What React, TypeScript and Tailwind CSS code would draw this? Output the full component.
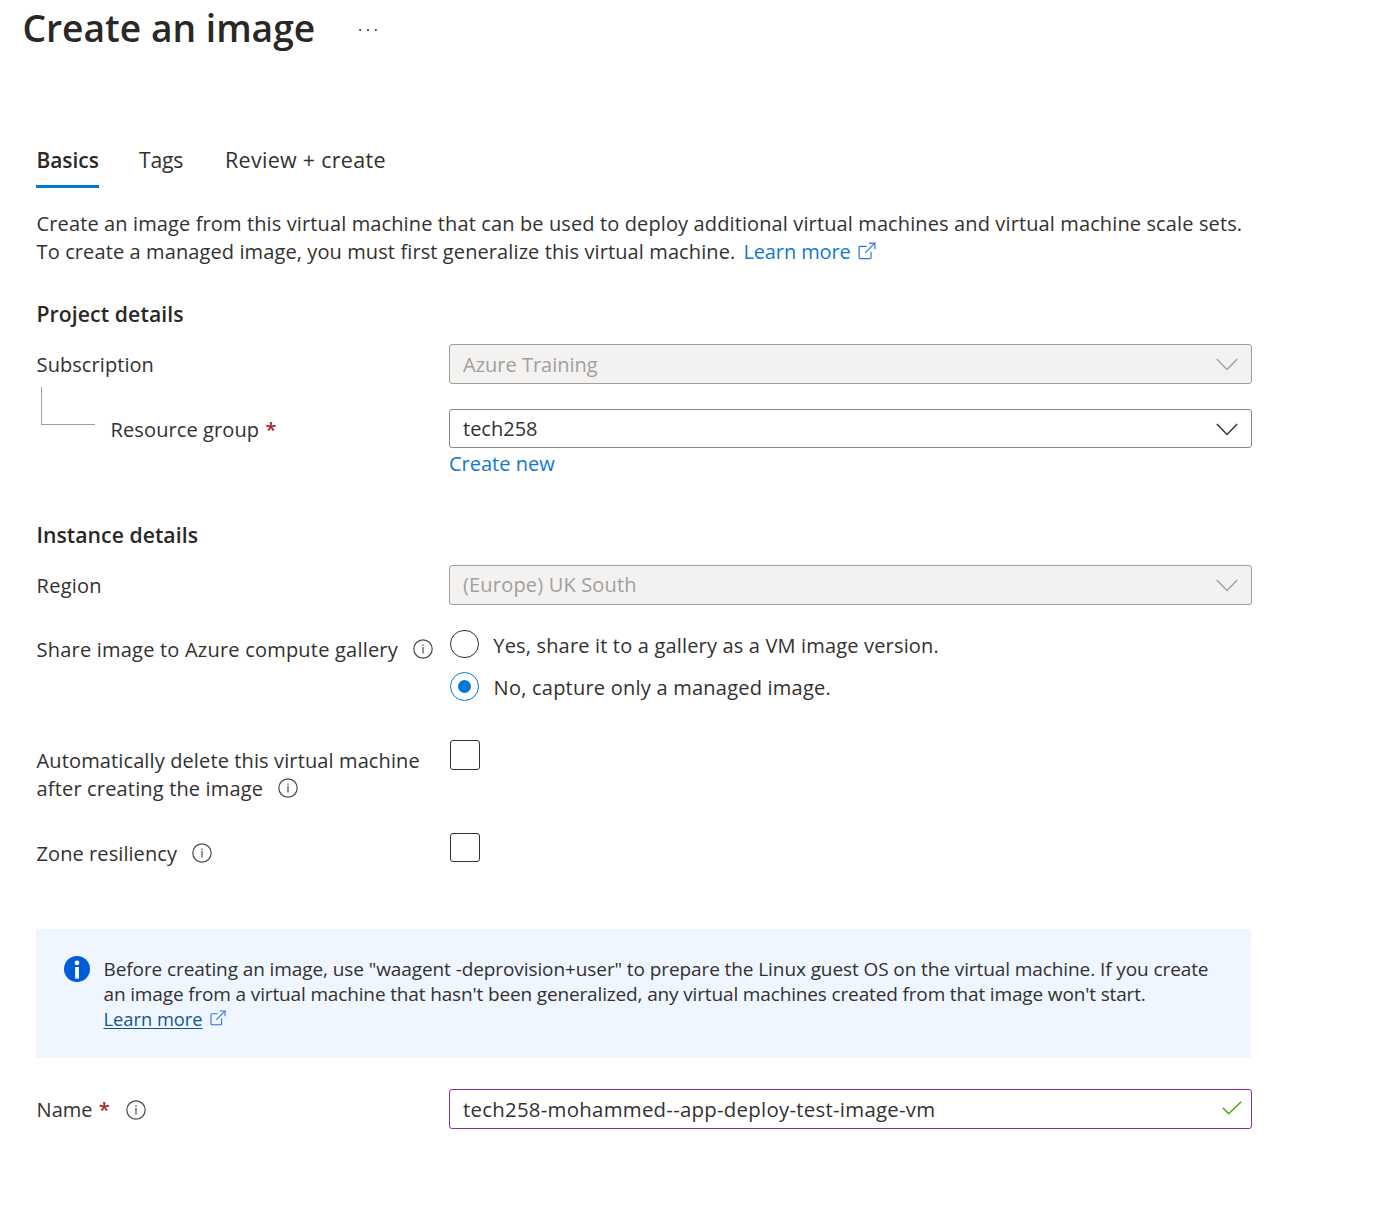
import type { ReactNode } from "react";

function InfoIcon({ className = "" }: { className?: string }) {
  return (
    <svg viewBox="0 0 20 20" className={`size-5 shrink-0 ${className}`} fill="none" stroke="#4a4948" strokeWidth="1.2">
      <circle cx="10" cy="10" r="9.2" />
      <path d="M10 8V14.4" />
      <path d="M10 5.4V6.9" />
    </svg>
  );
}

function ExternalIcon({ className = "" }: { className?: string }) {
  return (
    <svg viewBox="0 0 18 18" className={`shrink-0 ${className}`} fill="none" stroke="#2f6fe0" strokeWidth="1.2">
      <path d="M8.6 4.3H2.3Q1.1 4.3 1.1 5.5V15.4Q1.1 16.6 2.3 16.6H11.8Q13 16.6 13 15.4V9.4" />
      <path d="M7.2 10.9L16.8 1.2" />
      <path d="M11 1.1H16.9V7" />
    </svg>
  );
}

function Chevron() {
  return (
    <svg viewBox="0 0 22 13" className="mt-px h-[13px] w-[22px] shrink-0" fill="none" stroke="currentColor" strokeWidth="1.4">
      <path d="M0.8 1L11 11.4L21.2 1" />
    </svg>
  );
}

function Required() {
  return <b className="ml-px font-semibold text-[#a4262c]">*</b>;
}

function Select({ children, disabled = false, className = "" }: { children: ReactNode; disabled?: boolean; className?: string }) {
  return (
    <div
      className={`flex w-[803px] items-center justify-between rounded-[3px] border pr-[13.5px] pl-[13px] ${
        disabled ? "border-[#a19f9d] bg-[#f3f2f1] text-[#a19f9d]" : "border-[#8a8886] bg-white"
      } ${className}`}
    >
      {children}
      <Chevron />
    </div>
  );
}

function Radio({ checked = false, className = "" }: { checked?: boolean; className?: string }) {
  return (
    <span
      className={`flex w-[29px] shrink-0 items-center justify-center rounded-full border ${
        checked ? "border-[#0078d4]" : "border-[#323130]"
      } ${className}`}
    >
      {checked && <span className="size-[13px] rounded-full bg-[#0078d4]" />}
    </span>
  );
}

export default function App() {
  return (
    <div className="h-[1205px] w-[1373px] overflow-hidden bg-white font-['Open_Sans','Noto_Sans',sans-serif] text-[20px] leading-7 whitespace-nowrap text-[#323130]">
      <header className="flex h-14 items-center pl-[22.5px]">
        <h1 className="w-[335.5px] text-[37.2px] leading-[56px] font-semibold text-[#292827]">Create an image</h1>
        <svg viewBox="0 0 20 4" className="mt-[4px] h-1 w-5" fill="#323130">
          <circle cx="2.2" cy="2" r="1.1" />
          <circle cx="10" cy="2" r="1.1" />
          <circle cx="17.8" cy="2" r="1.1" />
        </svg>
      </header>

      <main className="pl-9">
        <nav className="mt-[90px] flex h-[42px] text-[21.5px]">
          <span className="mr-[40px] w-[63px] border-b-[3px] border-[#0078d4] pl-[0.4px] text-[20.9px] font-semibold text-[#292827]">Basics</span>
          <span className="mr-[41px] w-[45px] text-[21.2px] tracking-[-0.25px]">Tags</span>
          <span className="tracking-[0.28px]">Review + create</span>
        </nav>

        <section className="mt-[22px] pl-[0.6px]">
          <p className="tracking-[0.12px]">
            Create an image from this virtual machine that can be used to deploy additional virtual machines and virtual machine scale sets.
          </p>
          <p className="flex tracking-[0.105px]">
            To create a managed image, you must first generalize this virtual machine.
            <a className="ml-[8px] flex text-[#0f78d4]">
              <span className="w-[115px] tracking-[-0.1px]">Learn more</span>
              <ExternalIcon className="mt-[4px] size-[18px]" />
            </a>
          </p>
        </section>

        <h2 className="mt-[34px] pl-[0.4px] text-[21.2px] font-semibold tracking-[0.1px] text-[#292827]">Project details</h2>
        <div className="mt-4 flex h-10 items-center">
          <span className="w-[413px] pt-0.5 pl-[0.6px] tracking-[0.07px]">Subscription</span>
          <Select disabled className="h-10">
            <span className="pt-0.5">Azure Training</span>
          </Select>
        </div>
        <div className="flex">
          <span className="mt-[3px] mr-[15px] ml-[5px] h-[38px] w-[54px] border-b border-l border-[#a19f9d]" />
          <span className="mt-[32px] w-[339px] pl-[0.6px] tracking-[0.1px]">
            Resource group <Required />
          </span>
          <div className="mt-[25px]">
            <Select className="h-[39px]">tech258</Select>
            <a className="mt-0.5 block text-[#0f78d4]">Create new</a>
          </div>
        </div>

        <h2 className="mt-[43px] pl-[0.4px] text-[21.2px] font-semibold tracking-[0.05px] text-[#292827]">Instance details</h2>
        <div className="mt-4 flex h-10 items-center">
          <span className="w-[413px] pt-0.5 pl-[0.6px] tracking-[0.25px]">Region</span>
          <Select disabled className="h-10">
            <span className="tracking-[0.18px]">(Europe) UK South</span>
          </Select>
        </div>

        <div className="mt-[25px] flex h-[71px]">
          <div className="mt-[6px] flex w-[414px] pl-[0.6px]">
            <span className="w-[376.4px] tracking-[0.21px]">Share image to Azure compute gallery</span>
            <InfoIcon className="mt-[3.4px]" />
          </div>
          <div>
            <div className="flex h-7 gap-[14px]">
              <Radio className="h-[28px]" />
              <span className="mt-0.5 pl-[0.3px] tracking-[0.17px]">Yes, share it to a gallery as a VM image version.</span>
            </div>
            <div className="mt-[14px] flex h-[29px] gap-[14px]">
              <Radio checked className="h-[29px]" />
              <span className="mt-0.5 pl-[0.6px] tracking-[0.23px]">No, capture only a managed image.</span>
            </div>
          </div>
        </div>

        <div className="mt-[39px] flex h-[63px]">
          <div className="mt-[7px] w-[414px] pl-[0.6px]">
            <div className="tracking-[0.12px]">Automatically delete this virtual machine</div>
            <div className="flex">
              <span className="w-[241.4px] tracking-[0.16px]">after creating the image</span>
              <InfoIcon className="mt-[3.4px]" />
            </div>
          </div>
          <span className="h-[30px] w-[30px] rounded-[3px] border border-[#323130]" />
        </div>

        <div className="mt-[30px] flex h-[34px]">
          <div className="mt-[7px] flex w-[414px] pl-[0.6px]">
            <span className="w-[155.4px] tracking-[0.07px]">Zone resiliency</span>
            <InfoIcon className="mt-[3.4px]" />
          </div>
          <span className="h-[29px] w-[30px] rounded-[3px] border border-[#323130]" />
        </div>

        <aside className="mt-[62px] flex h-[129px] w-[1215px] rounded-[3px] bg-[#eff6ff] pl-7 text-[19px] leading-[25px]">
          <svg viewBox="0 0 26 26" className="mt-[27px] mr-[13.5px] size-[26px]">
            <circle cx="13" cy="13" r="13" fill="#015cda" />
            <circle cx="13" cy="6.8" r="2.4" fill="white" />
            <path d="M11.1 11H14.9V22.6H11.1Z" fill="white" />
          </svg>
          <div className="mt-[28px]">
            <p className="tracking-[-0.091px]">
              Before creating an image, use "waagent -deprovision+user" to prepare the Linux guest OS on the virtual machine. If you create
            </p>
            <p className="tracking-[-0.145px]">
              an image from a virtual machine that hasn't been generalized, any virtual machines created from that image won't start.
            </p>
            <p className="-mt-px flex">
              <a className="mr-[7.4px] text-[18.3px] text-[#11568f] underline underline-offset-2">Learn more</a>
              <ExternalIcon className="mt-[4px] size-4" />
            </p>
          </div>
        </aside>

        <div className="mt-[31px] flex h-10 items-center">
          <div className="flex w-[413px] pt-px pl-[0.6px]">
            <span className="w-[89.4px] pt-px">
              Name <Required />
            </span>
            <InfoIcon className="mt-[5px]" />
          </div>
          <div className="flex h-10 w-[803px] items-center justify-between rounded-[3px] border border-[#8a2da5] pr-[9px] pl-[13px]">
            <span className="pb-px text-[20.4px] tracking-[0.26px]">tech258-mohammed--app-deploy-test-image-vm</span>
            <svg viewBox="0 0 20 14" className="mb-0.5 h-[14px] w-5" fill="none" stroke="#57a300" strokeWidth="1.5">
              <path d="M0.8 6.8L6.7 12.8L19.2 0.8" />
            </svg>
          </div>
        </div>
      </main>
    </div>
  );
}
